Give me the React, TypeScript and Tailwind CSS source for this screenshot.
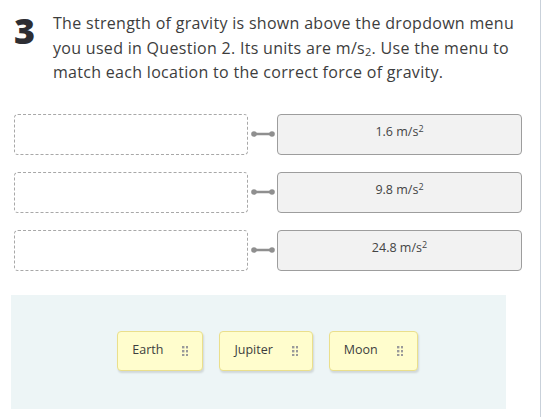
const rows = ["1.6", "9.8", "24.8"];
const chips = ["Earth", "Jupiter", "Moon"];

function Grip() {
  return (
    <svg width="6" height="10" viewBox="0 0 6 10" className="shrink-0">
      {[0, 4, 8].map((y) =>
        [0, 4].map((x) => <rect key={`${x}-${y}`} x={x} y={y} width="2.4" height="2.4" fill="#9a9a9a" />)
      )}
    </svg>
  );
}

function Connector() {
  return (
    <svg width="29" height="10" viewBox="0 0 29 10" className="shrink-0">
      <line x1="7" y1="5" x2="24" y2="5" stroke="#8f8f8f" strokeWidth="2.5" />
      <circle cx="6" cy="5" r="2.8" fill="#8f8f8f" />
      <circle cx="24" cy="5" r="2.8" fill="#8f8f8f" />
    </svg>
  );
}

export default function App() {
  return (
    <div
      className="relative w-[541px] h-[417px] bg-white border-r border-[#c9d1da] text-[#3b3b3b]"
      style={{ fontFamily: "'Open Sans', 'Noto Sans', sans-serif" }}
    >
      <div className="flex pl-[14px] pt-[11px]">
        <div className="w-[39px] shrink-0 pt-[2px] text-[36px] font-extrabold leading-[36px] text-[#2e2e33]">3</div>
        <p className="w-[462px] text-[16px] tracking-[0.3px] leading-[24.5px] text-[#3d3d3d]">
          The strength of gravity is shown above the dropdown menu you used in Question 2. Its units are m/s
          <sub className="text-[11px]">2</sub>. Use the menu to match each location to the correct force of
          gravity.
        </p>
      </div>

      <div className="mt-[29px] flex flex-col gap-[17px]">
        {rows.map((v) => (
          <div key={v} className="flex items-center pl-[14px]">
            <div className="w-[234px] h-[41px] rounded-[4px] border border-dashed border-[#a8a8a8]" />
            <Connector />
            <div className="w-[245px] h-[41px] rounded-[4px] border border-[#9d9d9d] bg-[#f2f2f2] flex items-center justify-center pb-[3px] text-[12.5px] text-[#444]">
              <span>
                {v} m/s<sup className="text-[9px]">2</sup>
              </span>
            </div>
          </div>
        ))}
      </div>

      <div className="ml-[11px] mt-[24px] w-[495px] h-[114px] bg-[#edf5f6] flex items-center justify-center gap-4 pl-[18px]">
        {chips.map((c) => (
          <div
            key={c}
            className="h-[40px] -mt-[2px] flex items-center gap-[19px] pl-[14px] pr-[14px] rounded-[4px] border border-[#eadf8c] bg-[#fffdcd] shadow-[1px_2px_2px_rgba(0,0,0,0.12)] text-[12.5px] text-[#3d3d3d]"
          >
            <span>{c}</span>
            <Grip />
          </div>
        ))}
      </div>
    </div>
  );
}
